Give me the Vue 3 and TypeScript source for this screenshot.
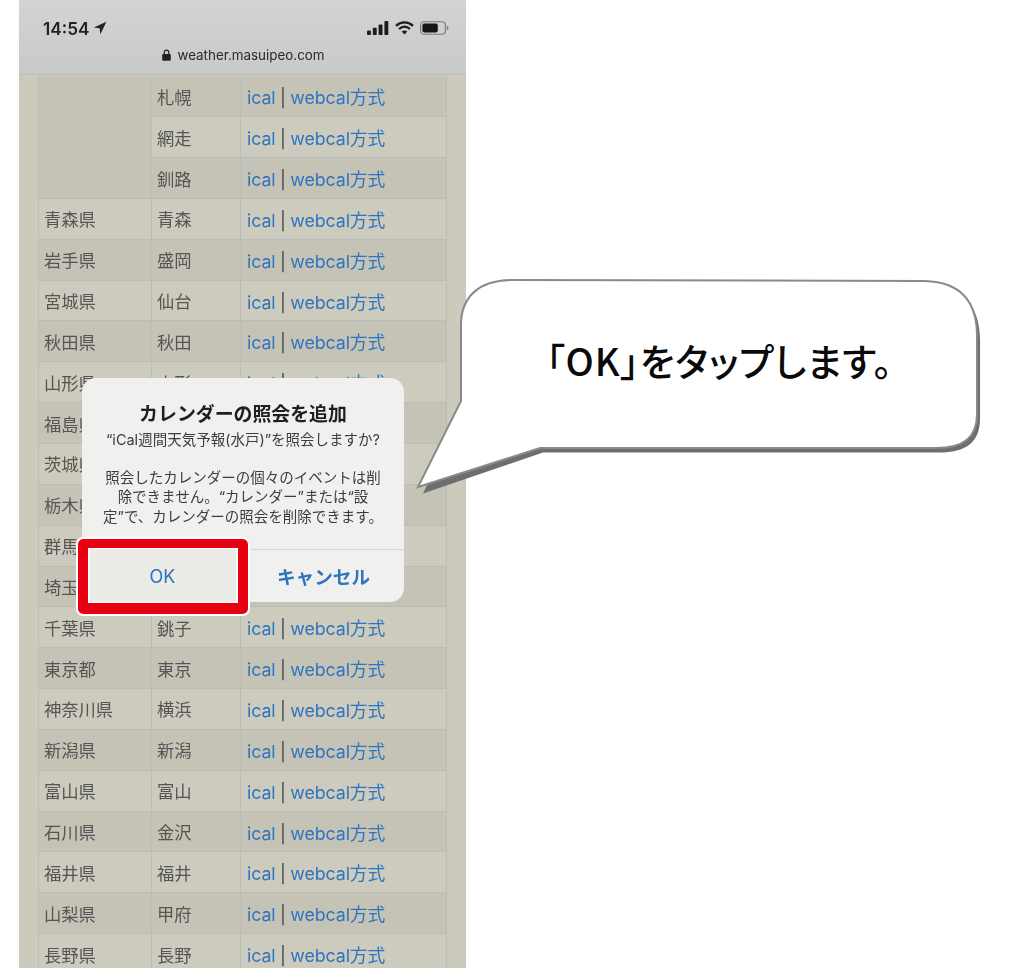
<script setup lang="ts">
interface Row { pref: string; city: string; dark: boolean; covered: boolean }
const data: [string, string][] = [
  ['', '札幌'], ['', '網走'], ['', '釧路'], ['青森県', '青森'], ['岩手県', '盛岡'], ['宮城県', '仙台'],
  ['秋田県', '秋田'], ['山形県', '山形'], ['福島県', '福島'], ['茨城県', '水戸'], ['栃木県', '宇都宮'],
  ['群馬県', '前橋'], ['埼玉県', 'さいたま'], ['千葉県', '銚子'], ['東京都', '東京'], ['神奈川県', '横浜'],
  ['新潟県', '新潟'], ['富山県', '富山'], ['石川県', '金沢'], ['福井県', '福井'], ['山梨県', '甲府'], ['長野県', '長野'],
]
// Rows 8–12 lie fully behind the alert; only the prefecture name peeks out.
const rows: Row[] = data.map(([pref, city], i) => ({
  pref,
  city,
  dark: i % 2 === 0,
  covered: i >= 8 && i <= 12,
}))
</script>

<template>
  <div class="page">
    <div class="phone">
      <header class="bar">
        <div class="status">
          <div class="time">
            <span>14:54</span>
            <svg width="14" height="14" viewBox="0 0 14 14"><path d="M13.4 .8 .8 6.4 6.6 7.2 7.4 13.2Z" fill="#222" /></svg>
          </div>
          <div class="sys">
            <svg width="22" height="14" viewBox="0 0 22 14" fill="#1c1c1c">
              <rect x="0" y="9.6" width="3.9" height="4.4" rx=".8" />
              <rect x="5.8" y="6.8" width="3.9" height="7.2" rx=".8" />
              <rect x="11.6" y="3.6" width="3.9" height="10.4" rx=".8" />
              <rect x="17.4" y="0" width="3.9" height="14" rx=".8" />
            </svg>
            <svg width="19" height="14" viewBox="0 0 19 14" fill="none" stroke="#1c1c1c" stroke-width="2.3">
              <path d="M1 4.8C6 .2 13 .2 18 4.8" />
              <path d="M4 8C7.4 5 11.6 5 15 8" />
              <path d="M9.5 13.4 6.7 10.5C8.4 9.2 10.6 9.2 12.3 10.5Z" fill="#1c1c1c" stroke="none" />
            </svg>
            <svg width="29" height="14" viewBox="0 0 29 14">
              <rect x=".6" y=".8" width="24.8" height="12.4" rx="3.4" fill="none" stroke="#77787a" stroke-width="1.1" />
              <rect x="2.4" y="2.6" width="15.4" height="8.8" rx="1.8" fill="#151515" />
              <path d="M26.8 4.8c1.2.4 1.6 1.2 1.6 2.2s-.4 1.8-1.6 2.2Z" fill="#77787a" />
            </svg>
          </div>
        </div>
        <div class="url">
          <svg width="9" height="12" viewBox="0 0 9 12"><rect x=".2" y="5" width="8.6" height="6.8" rx="1.2" fill="#222" /><path d="M2.2 5V3.4a2.3 2.3 0 0 1 4.6 0V5" fill="none" stroke="#222" stroke-width="1.2" /></svg>
          <span>weather.masuipeo.com</span>
        </div>
      </header>
      <main class="content">
        <div class="table">
          <div v-for="(r, i) in rows" :key="r.city" class="row" :class="{ dark: r.dark }">
            <div class="cell pref" :class="{ merged: i < 3, noline: i < 2 }">{{ r.pref }}</div>
            <div class="cell"><template v-if="!r.covered">{{ r.city }}</template></div>
            <div class="cell links">
              <span v-if="!r.covered"><a>ical</a> | <a>webcal方式</a></span>
            </div>
          </div>
        </div>
      </main>
    </div>

    <div class="dialog">
      <div class="msg">
        <h2>カレンダーの照会を追加</h2>
        <p>“iCal週間天気予報(水戸)”を照会しますか?</p>
        <p class="gap">照会したカレンダーの個々のイベントは削<br />除できません。“カレンダー”または“設<br />定”で、カレンダーの照会を削除できます。</p>
      </div>
      <div class="actions">
        <button class="ok">OK</button>
        <button class="cancel">キャンセル</button>
      </div>
    </div>
    <div class="mark"></div>

    <svg class="callout" width="1024" height="968" viewBox="0 0 1024 968">
      <path class="shade" d="M461 401V325C461 296 480 280 512 280L925 281C960 282 977 301 977 336V414C977 438 963 448 936 448H540L420 489Z" transform="translate(3 4.5)" />
      <path class="body" d="M461 401V325C461 296 480 280 512 280L925 281C960 282 977 301 977 336V414C977 438 963 448 936 448H540L418 487Z" />
      <text x="719.5" y="376" text-anchor="middle">「OK」をタップします。</text>
    </svg>
  </div>
</template>

<style>
html, body { margin: 0; background: #fff; }
</style>

<style scoped>
.page {
  position: relative;
  width: 1024px;
  height: 968px;
  overflow: hidden;
  background: #fff;
  font-family: Inter, "Noto Sans CJK JP", sans-serif;
}
.phone {
  width: 447px;
  height: 968px;
  margin-left: 19px;
  background: #cbcabd;
  overflow: hidden;
  filter: blur(.4px);
}
.bar {
  height: 75px;
  box-sizing: border-box;
  background: linear-gradient(#d3d3d3, #c8c9cb);
  border-bottom: 1px solid #bdbdb6;
}
.status {
  display: flex;
  justify-content: space-between;
  align-items: center;
  padding: 18px 17px 0 24px;
  height: 20px;
}
.time {
  display: flex;
  align-items: center;
  gap: 4px;
  font-size: 17.2px;
  font-weight: 600;
  color: #222;
}
.sys { display: flex; align-items: center; gap: 6px; }
.url {
  display: flex;
  justify-content: center;
  align-items: center;
  gap: 6px;
  margin-top: 9px;
  font-size: 13.4px;
  color: #2a2a2a;
  padding-left: 2px;
}
.content { padding: 1.4px 19px 0; }
.table { display: flex; flex-direction: column; }
.row {
  display: grid;
  grid-template-columns: 114px 89px 206px;
  height: 40.85px;
  background: #cccbbd;
  color: #555;
  font-size: 17.3px;
  box-sizing: border-box;
}
.row.dark { background: #c5c3b6; }
.cell {
  display: flex;
  align-items: center;
  padding-left: 5px;
  box-sizing: border-box;
  white-space: nowrap;
  overflow: hidden;
  border-right: 1px solid #b9bcbf;
  border-bottom: 1px solid #b9bcbf;
}
.cell:first-child { border-left: 1px solid #bcbdb8; }
.pref.merged { background: #c5c3b6; }
.pref.noline { border-bottom-color: #c5c3b6; }
.links { padding-left: 6px; font-size: 17.8px; letter-spacing: -.1px; word-spacing: -.4px; color: #444; }
.links a { color: #2f74bf; }
.dialog {
  position: absolute;
  left: 82px;
  top: 378px;
  width: 322px;
  height: 224px;
  display: flex;
  flex-direction: column;
  border-radius: 14px;
  background: #f0f0ee;
  overflow: hidden;
  text-align: center;
  filter: blur(.3px);
}
.msg { flex: 1; padding: 25px 10px 0; color: #3c3c3c; font-size: 14.5px; line-height: 19.5px; }
.msg h2 { margin: 0 0 3px; font-size: 18.9px; line-height: 24px; font-weight: 700; color: #1f1f1f; }
.msg p { margin: 0; white-space: nowrap; }
.msg .gap { margin-top: 18px; }
.actions {
  display: grid;
  grid-template-columns: 161px 161px;
  height: 52px;
  border-top: 1px solid #d6d6d4;
}
.actions button {
  border: 0;
  background: transparent;
  color: #2f74bf;
  font-family: inherit;
  padding: 0;
}
.actions .ok { font-size: 18px; font-weight: 400; background: #ebebe8; }
.actions .cancel { font-size: 18.6px; font-weight: 700; padding-bottom: 2px; }
.mark {
  position: absolute;
  left: 78px;
  top: 539px;
  width: 170px;
  height: 75px;
  box-sizing: border-box;
  border: solid #e60012;
  border-width: 9.5px 10px 11.5px;
  border-radius: 5px;
  outline: 2px solid #fff;
  box-shadow: inset 0 0 0 1.5px #fff;
}
.callout { position: absolute; left: 0; top: 0; pointer-events: none; }
.shade { fill: #6e6e6e; }
.body { fill: #fff; stroke: #8a8a8a; stroke-width: 2; }
.callout text {
  font-family: "Noto Sans CJK JP", sans-serif;
  font-size: 37.5px;
  font-weight: 500;
  fill: #0a0a0a;
  font-feature-settings: "palt";
  letter-spacing: .8px;
}
</style>
